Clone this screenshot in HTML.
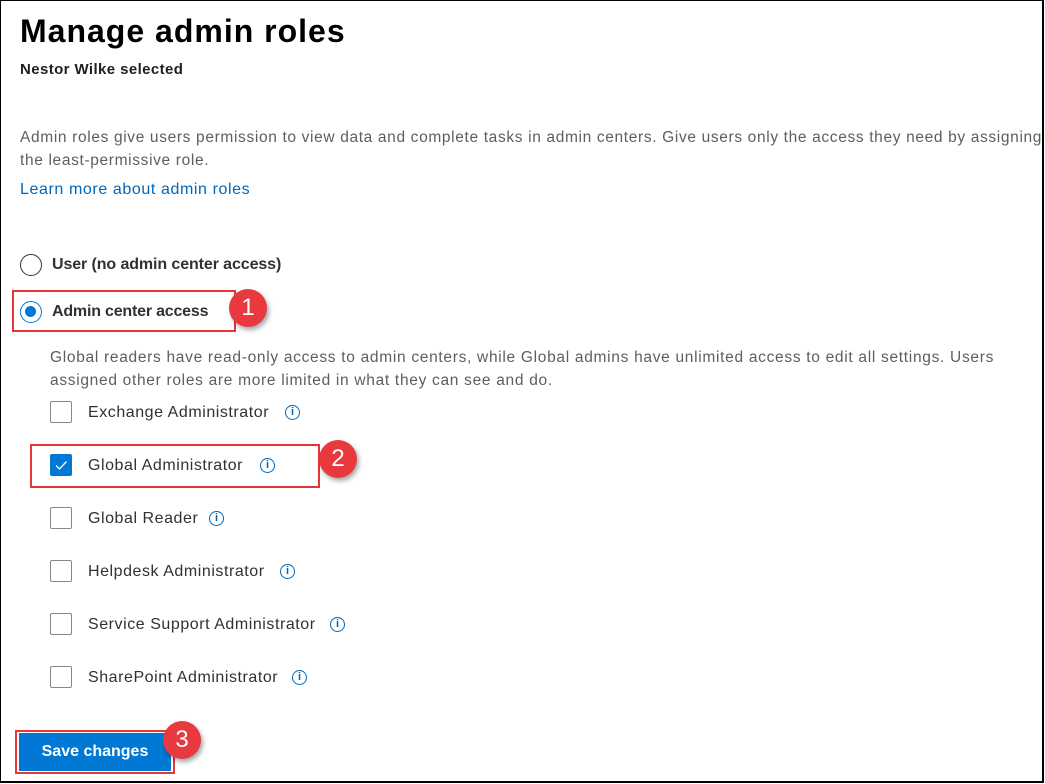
<!DOCTYPE html>
<html><head><style>
body{margin:0;width:1045px;height:784px;overflow:hidden;font-family:"Liberation Sans",sans-serif;color:#323130;background:#fff}
.frame{position:absolute;left:0;top:0;width:1041px;height:780px;border:2px solid #000;border-width:1px 2px 2px 1px;overflow:hidden}
.a{position:absolute;white-space:nowrap}
.cb{position:absolute;width:22px;height:22px;border:1px solid #8a8886;border-radius:2px;box-sizing:border-box;background:#fff}
.info{position:absolute;width:15px;height:15px;border:1.5px solid #0067b8;border-radius:50%;box-sizing:border-box;color:#0067b8;font-size:11px;font-weight:bold;text-align:center;line-height:12px}
.lbl{font-size:16px;color:#323130;letter-spacing:0.55px}
.red{position:absolute;border:2px solid #e8353a;box-sizing:border-box}
.badge{position:absolute;width:38px;height:38px;border-radius:50%;background:#e8393f;color:#fff;font-size:24px;text-align:center;line-height:38px;box-shadow:2px 3px 5px rgba(0,0,0,.35)}
</style></head><body><div class="frame">
<div class="a" style="left:19px;top:12px;font-size:32px;font-weight:bold;color:#000;letter-spacing:1px">Manage admin roles</div>
<div class="a" style="left:19px;top:60px;font-size:15px;font-weight:bold;color:#201f1e;letter-spacing:0.4px">Nestor Wilke selected</div>
<div class="a" style="left:19px;top:125px;font-size:15.5px;line-height:23px;color:#605e5c;letter-spacing:0.65px">Admin roles give users permission to view data and complete tasks in admin centers. Give users only the access they need by assigning<br>the least-permissive role.</div>
<div class="a" style="left:19px;top:180px;font-size:16px;color:#0067b8;letter-spacing:0.6px">Learn more about admin roles</div>
<div class="a" style="left:19px;top:253px;width:22px;height:22px;border:1.5px solid #323130;border-radius:50%;box-sizing:border-box"></div>
<div class="a" style="left:51px;top:255px;font-size:16px;font-weight:bold;letter-spacing:-0.1px">User (no admin center access)</div>
<div class="red" style="left:11px;top:289px;width:224px;height:42px"></div>
<div class="a" style="left:19px;top:300px;width:22px;height:22px;border:1.5px solid #0078d4;border-radius:50%;box-sizing:border-box"><div style="position:absolute;left:4px;top:4px;width:11px;height:11px;border-radius:50%;background:#0078d4"></div></div>
<div class="a" style="left:51px;top:302px;font-size:16px;font-weight:bold;letter-spacing:-0.2px">Admin center access</div>
<div class="badge" style="left:228px;top:288px">1</div>
<div class="a" style="left:49px;top:345px;font-size:15.5px;line-height:23px;color:#605e5c;letter-spacing:0.7px">Global readers have read-only access to admin centers, while Global admins have unlimited access to edit all settings. Users<br>assigned other roles are more limited in what they can see and do.</div>
<div class="cb" style="left:49px;top:400px"></div><div class="a lbl" style="left:87px;top:403px">Exchange Administrator</div><div class="info" style="left:284px;top:404px">i</div>
<div class="red" style="left:29px;top:443px;width:290px;height:44px"></div>
<div class="cb" style="left:49px;top:453px;background:#0078d4;border-color:#0078d4"><svg width="20" height="20" style="position:absolute;left:0;top:0"><path d="M5 10.5l3.5 3.5 7-7.5" stroke="#fff" stroke-width="1.3" fill="none"/></svg></div>
<div class="a lbl" style="left:87px;top:456px">Global Administrator</div><div class="info" style="left:259px;top:457px">i</div>
<div class="badge" style="left:318px;top:439px">2</div>
<div class="cb" style="left:49px;top:506px"></div><div class="a lbl" style="left:87px;top:509px">Global Reader</div><div class="info" style="left:208px;top:510px">i</div>
<div class="cb" style="left:49px;top:559px"></div><div class="a lbl" style="left:87px;top:562px">Helpdesk Administrator</div><div class="info" style="left:279px;top:563px">i</div>
<div class="cb" style="left:49px;top:612px"></div><div class="a lbl" style="left:87px;top:615px">Service Support Administrator</div><div class="info" style="left:329px;top:616px">i</div>
<div class="cb" style="left:49px;top:665px"></div><div class="a lbl" style="left:87px;top:668px">SharePoint Administrator</div><div class="info" style="left:291px;top:669px">i</div>
<div class="red" style="left:14px;top:729px;width:160px;height:44px"></div>
<div class="a" style="left:18px;top:732px;width:152px;height:38px;background:#0078d4;color:#fff;font-size:16px;font-weight:bold;text-align:center;line-height:38px">Save changes</div>
<div class="badge" style="left:162px;top:720px">3</div>
</div></body></html>
